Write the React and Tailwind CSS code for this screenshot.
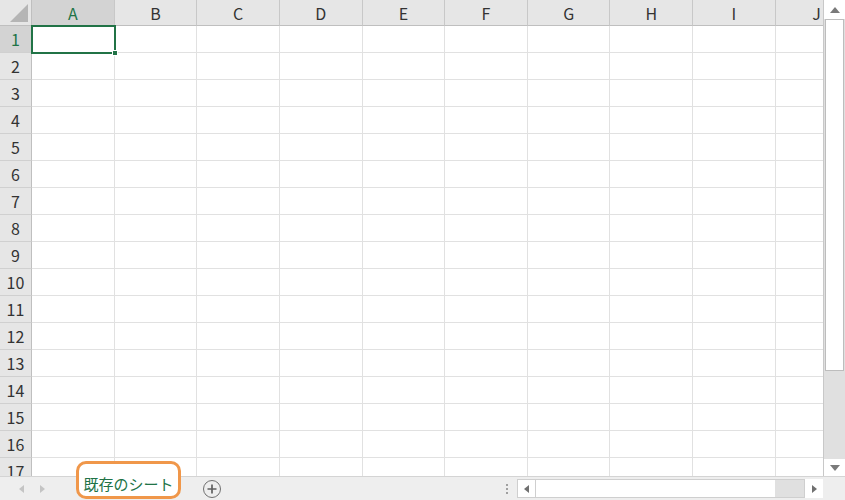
import React from "react";

const cols = ["A", "B", "C", "D", "E", "F", "G", "H", "I", "J"];
const rows = Array.from({ length: 17 }, (_, i) => i + 1);

export default function App() {
  return (
    <div
      className="relative flex h-[500px] w-[845px] flex-col overflow-hidden bg-white"
      style={{ fontFamily: '"Noto Sans CJK JP", "Liberation Sans", sans-serif' }}
    >
      <div className="flex h-[476px]">
        {/* grid */}
        <div className="relative w-[823px] overflow-hidden">
          <div className="grid grid-cols-[32px_repeat(10,82.65px)] grid-rows-[26px_repeat(17,27px)]">
            {/* corner */}
            <div className="relative border-b border-r border-[#bfbfbf] bg-[#e6e6e6]">
              <svg className="absolute bottom-[3px] right-[3px]" width="18" height="18" viewBox="0 0 18 18">
                <polygon points="18,0 18,18 0,18" fill="#b5b5b5" />
              </svg>
            </div>
            {cols.map((c, i) => (
              <div
                key={c}
                className={`flex items-center justify-center border-b border-r text-[16px] leading-none ${
                  i === 0
                    ? "border-b-[#bfbfbf] border-r-[#c8c8c8] bg-[#d3d3d3] text-[#217346]"
                    : "border-b-[#bfbfbf] border-r-[#c8c8c8] bg-[#e6e6e6] text-[#333]"
                }`}
              >
                {c}
              </div>
            ))}
            {rows.map((r) => (
              <React.Fragment key={r}>
                <div
                  className={`flex items-center justify-center border-b border-r border-b-[#d0d0d0] border-r-[#bfbfbf] text-[16px] leading-none ${
                    r === 1 ? "bg-[#d3d3d3] text-[#217346]" : "bg-[#e6e6e6] text-[#333]"
                  }`}
                >
                  {r}
                </div>
                {cols.map((c) => (
                  <div key={c} className="border-b border-r border-[#e1e1e1]" />
                ))}
              </React.Fragment>
            ))}
          </div>
          {/* selected cell */}
          <div className="absolute left-[31px] top-[25px] h-[29px] w-[85px] border-2 border-[#217346]">
            <div className="absolute -bottom-[4px] -right-[4px] h-[6px] w-[6px] border border-white bg-[#217346]" />
          </div>
        </div>
        {/* vertical scrollbar */}
        <div className="flex w-[22px] flex-col border-l border-[#c8c8c8] bg-[#e0e0e0]">
          <div className="flex h-[19px] items-center justify-center bg-white">
            <svg width="10" height="6" viewBox="0 0 10 6">
              <polygon points="5,0 10,6 0,6" fill="#7a7a7a" />
            </svg>
          </div>
          <div className="mx-[1px] h-[352px] border border-[#bdbdbd] bg-white" />
          <div className="flex-1" />
          <div className="flex h-[18px] items-center justify-center border-t border-[#e0e0e0] bg-white">
            <svg width="10" height="6" viewBox="0 0 10 6">
              <polygon points="0,0 10,0 5,6" fill="#7a7a7a" />
            </svg>
          </div>
        </div>
      </div>
      {/* bottom bar */}
      <div className="flex h-[24px] items-center border-t border-[#d4d4d4] bg-[#eeeeee]">
        <div className="ml-[19px] flex w-[40px] items-center gap-[16px]">
          <svg width="5" height="8" viewBox="0 0 5 8">
            <polygon points="5,0 5,8 0,4" fill="#c4c4c4" />
          </svg>
          <svg width="5" height="8" viewBox="0 0 5 8">
            <polygon points="0,0 0,8 5,4" fill="#c4c4c4" />
          </svg>
        </div>
        <div className="w-[144px]" />
        <div className="flex h-[18px] w-[18px] items-center justify-center rounded-full border-[1.5px] border-[#707070]">
          <svg width="10" height="10" viewBox="0 0 10 10">
            <path d="M5 0.5V9.5M0.5 5H9.5" stroke="#606060" strokeWidth="1.7" />
          </svg>
        </div>
        <div className="w-[285px]" />
        <div className="flex flex-col gap-[2px]">
          <div className="h-[2px] w-[2px] bg-[#a0a0a0]" />
          <div className="h-[2px] w-[2px] bg-[#a0a0a0]" />
          <div className="h-[2px] w-[2px] bg-[#a0a0a0]" />
        </div>
        <div className="ml-[9px] flex h-[19px] w-[288px] border border-[#cfcfcf] bg-[#e0e0e0]">
          <div className="flex w-[18px] items-center justify-center border-r border-[#cfcfcf] bg-white">
            <svg width="5" height="8" viewBox="0 0 5 8">
              <polygon points="5,0 5,8 0,4" fill="#707070" />
            </svg>
          </div>
          <div className="w-[239px] bg-white" />
          <div className="flex-1" />
        </div>
        <div className="flex h-[19px] w-[18px] items-center justify-center bg-white">
          <svg width="5" height="8" viewBox="0 0 5 8">
            <polygon points="0,0 0,8 5,4" fill="#707070" />
          </svg>
        </div>
      </div>
      {/* highlighted sheet tab */}
      <div className="absolute left-[76px] top-[461px] flex h-[38px] w-[105px] items-end justify-center rounded-[10px] border-[3px] border-[#f0974a] bg-white pb-[1px]">
        <span className="text-[15px] leading-[22px] text-[#217346]">既存のシート</span>
      </div>
    </div>
  );
}
